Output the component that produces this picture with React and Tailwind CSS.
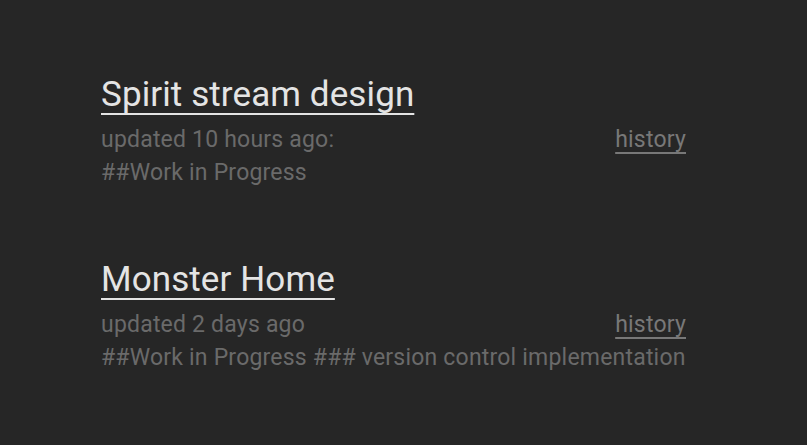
export default function App() {
  const posts = [
    { title: 'Spirit stream design', updated: 'updated 10 hours ago:', body: '##Work in Progress' },
    { title: 'Monster Home', updated: 'updated 2 days ago', body: '##Work in Progress ### version control implementation' },
  ];

  return (
    <div className="min-h-screen w-full bg-[#262626] pt-[72px] font-['Roboto',sans-serif]">
      <div className="ml-[101px] w-[585px] flex flex-col gap-[68px]">
        {posts.map(p => (
          <div key={p.title}>
            <a href="#" className="text-[35px] leading-[46px] tracking-[0.1px] text-[#e4e4e4] underline decoration-2 underline-offset-[7px]">{p.title}</a>
            <div className="mt-[5px] flex justify-between text-[23px] leading-[33px] tracking-[0.2px] text-[#6a6a6a]">
              <span>{p.updated}</span>
              <a href="#" className="text-[#787878] underline underline-offset-[5px]">history</a>
            </div>
            <p className="text-[23px] leading-[33px] tracking-[0.2px] text-[#6a6a6a]">{p.body}</p>
          </div>
        ))}
      </div>
    </div>
  );
}
